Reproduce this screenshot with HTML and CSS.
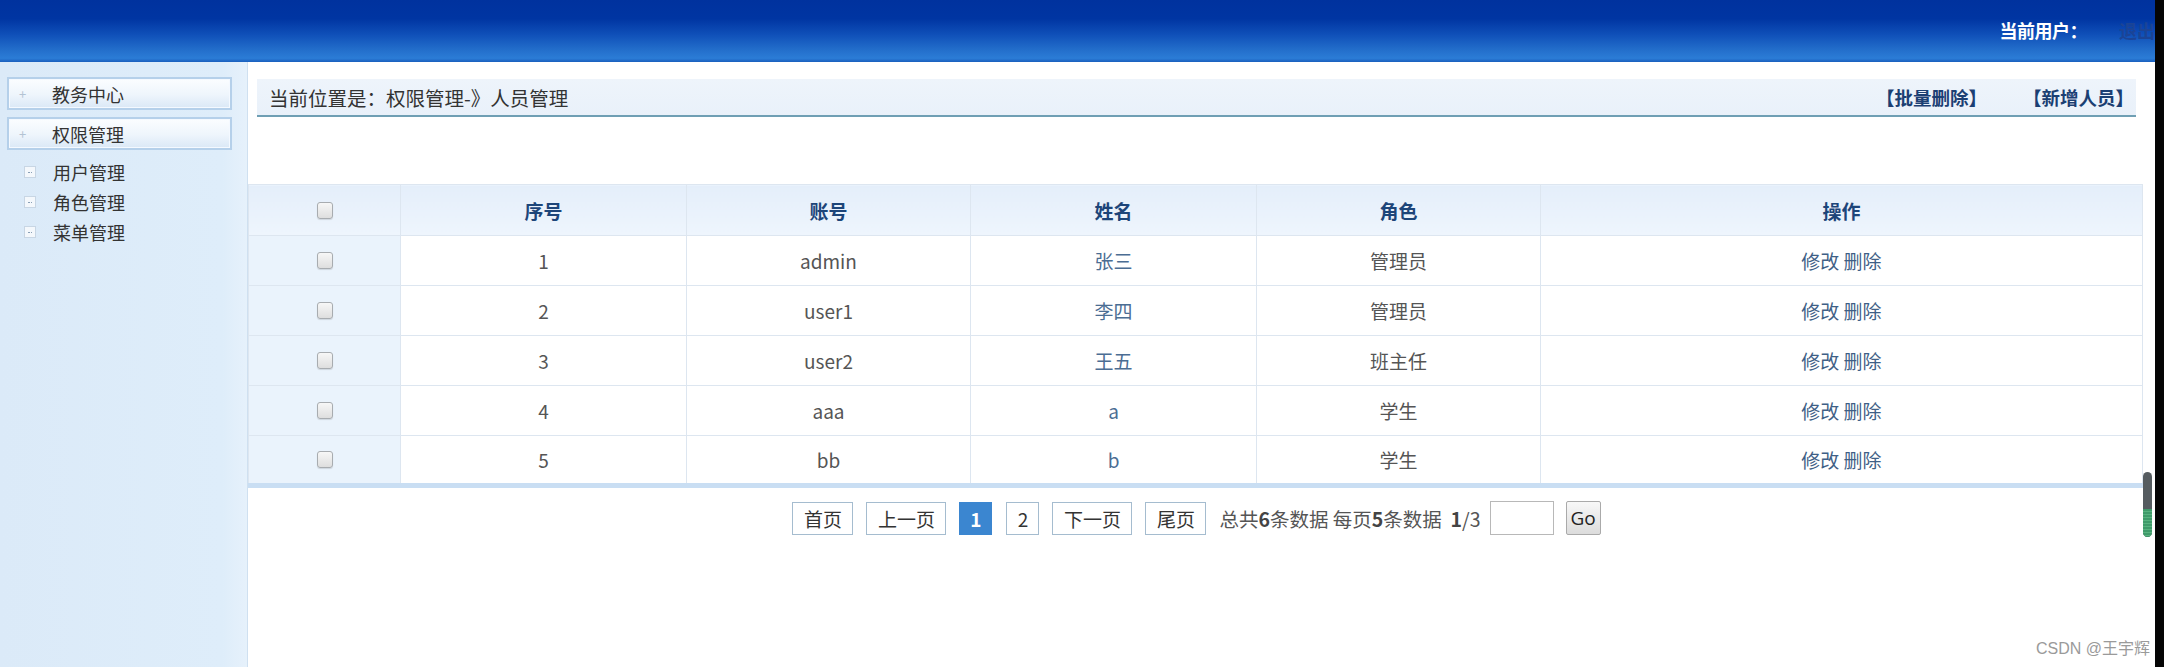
FILE: index.html
```html
<!DOCTYPE html>
<html lang="zh-CN">
<head>
<meta charset="utf-8">
<title>人员管理</title>
<link rel="stylesheet" href="styles.css">
</head>
<body>
<div class="screen">
  <div class="page">
    <header class="topbar">
      <span class="user-label">当前用户：</span>
      <span class="logout">退出</span>
    </header>
    <div class="body">
      <aside class="sidebar">
        <div class="menu-box"><span class="plus">+</span><span class="menu-text">教务中心</span></div>
        <div class="menu-box"><span class="plus">+</span><span class="menu-text">权限管理</span></div>
        <ul class="submenu">
          <li><span class="sub-icon"></span><span class="menu-text">用户管理</span></li>
          <li><span class="sub-icon"></span><span class="menu-text">角色管理</span></li>
          <li><span class="sub-icon"></span><span class="menu-text">菜单管理</span></li>
        </ul>
      </aside>
      <main class="main">
        <div class="crumb">
          <span class="crumb-text">当前位置是：权限管理-》人员管理</span>
          <div class="crumb-actions">
            <a class="act">【批量删除】</a>
            <a class="act">【新增人员】</a>
          </div>
        </div>
        <table class="grid">
          <colgroup>
            <col class="c-chk"><col class="c-mid"><col class="c-mid2"><col class="c-mid"><col class="c-mid2"><col>
          </colgroup>
          <thead>
            <tr><th class="chk"><input type="checkbox"></th><th>序号</th><th>账号</th><th>姓名</th><th>角色</th><th>操作</th></tr>
          </thead>
          <tbody>
            <tr><td class="chk"><input type="checkbox"></td><td>1</td><td>admin</td><td class="name">张三</td><td>管理员</td><td class="ops">修改 删除</td></tr>
            <tr><td class="chk"><input type="checkbox"></td><td>2</td><td>user1</td><td class="name">李四</td><td>管理员</td><td class="ops">修改 删除</td></tr>
            <tr><td class="chk"><input type="checkbox"></td><td>3</td><td>user2</td><td class="name">王五</td><td>班主任</td><td class="ops">修改 删除</td></tr>
            <tr><td class="chk"><input type="checkbox"></td><td>4</td><td>aaa</td><td class="name">a</td><td>学生</td><td class="ops">修改 删除</td></tr>
            <tr><td class="chk"><input type="checkbox"></td><td>5</td><td>bb</td><td class="name">b</td><td>学生</td><td class="ops">修改 删除</td></tr>
          </tbody>
        </table>
        <div class="pager">
          <a class="pbtn w-first">首页</a>
          <a class="pbtn w-prev">上一页</a>
          <a class="pbtn num active">1</a>
          <a class="pbtn num">2</a>
          <a class="pbtn w-prev">下一页</a>
          <a class="pbtn w-first">尾页</a>
          <span class="pinfo">总共<b>6</b>条数据 每页<b>5</b>条数据 &nbsp;<b>1</b>/3</span>
          <input class="pinput" type="text">
          <button class="go">Go</button>
        </div>
        <div class="scroll-thumb"><span class="thumb-green"></span></div>
        <div class="watermark">CSDN @王宇辉</div>
      </main>
    </div>
  </div>
  <div class="blackbar"></div>
</div>
</body>
</html>
```

FILE: styles.css
```css
* { box-sizing: border-box; }
html, body { margin: 0; padding: 0; }
body {
  width: 2164px;
  height: 667px;
  overflow: hidden;
  font-family: "Noto Sans CJK SC", "Noto Sans", sans-serif;
  font-size: 19px;
  color: #444;
  background: #fff;
}
.screen { display: flex; width: 2164px; height: 667px; }
.page { width: 2155px; height: 667px; display: flex; flex-direction: column; overflow: hidden; }
.blackbar { width: 9px; background: #050505; }

.topbar {
  height: 62px;
  flex: none;
  display: flex;
  align-items: center;
  justify-content: flex-end;
  background: linear-gradient(to bottom, #00329e 0%, #0035a2 30%, #0f4fb8 55%, #2470cc 82%, #2b7cd6 94%, #1a5fbe 100%);
}
.user-label { color: #fff; font-weight: bold; font-size: 18px; margin-top: -3px; letter-spacing: -0.5px; }
.logout { color: #1b4496; font-weight: bold; font-size: 18px; margin-left: 32px; margin-top: -3px; width: 36px; white-space: nowrap; overflow: hidden; }

.body { flex: 1; display: flex; min-height: 0; }

.sidebar {
  width: 248px;
  flex: none;
  background: linear-gradient(to right, #dbeaf8 0%, #deedfa 90%, #e6f1fb 100%);
  border-right: 1px solid #cfe0f0;
  padding: 15px 0 0 7px;
}
.menu-box {
  width: 225px;
  height: 33px;
  margin-bottom: 7px;
  display: flex;
  align-items: center;
  border: 2px solid #b5d0ea;
  background: linear-gradient(to bottom, #fbfdff 0%, #eef5fc 55%, #dae8f6 100%);
  box-shadow: inset 0 0 0 1px #f4f9ff;
}
.plus { width: 43px; padding-left: 10px; color: #b3c3d3; font-size: 13px; }
.menu-text { color: #333; font-size: 18px; }
.submenu { list-style: none; margin: 1px 0 0; padding: 0; }
.submenu li { height: 30px; display: flex; align-items: center; }
.sub-icon {
  width: 12px; height: 12px;
  margin: 0 17px 0 17px;
  border: 1px solid #c8d6e4;
  background: #f4f8fc;
  position: relative;
}
.sub-icon::after {
  content: "";
  position: absolute;
  left: 3px; top: 5px;
  width: 4px; height: 0;
  border-top: 1px dotted #8aa0b6;
}

.main { flex: 1; position: relative; padding-top: 17px; min-width: 0; }

.crumb {
  margin: 0 19px 0 9px;
  height: 38px;
  display: flex;
  align-items: center;
  justify-content: space-between;
  padding: 0 2px 0 12px;
  background: linear-gradient(to bottom, #eef4fb 0%, #e9f1fa 100%);
  border-bottom: 2px solid #6f9fb4;
}
.crumb-text { color: #333; font-size: 19.5px; }
.crumb-actions { display: flex; gap: 36px; }
.act { color: #1b3f73; font-weight: bold; font-size: 18.5px; cursor: pointer; }

.grid {
  margin-top: 67px;
  width: 1895px;
  border-collapse: collapse;
  table-layout: fixed;
  border-bottom: 5px solid #c9def3;
}
.c-chk { width: 152px; }
.c-mid { width: 286px; }
.c-mid2 { width: 284px; }
.grid th, .grid td {
  border: 1px solid #dde6f0;
  text-align: center;
  font-size: 19px;
  padding: 0;
}
.grid thead tr { height: 51px; }
.grid tbody tr { height: 50px; }
.grid th {
  color: #1d4579;
  font-weight: bold;
  background: linear-gradient(to bottom, #e4eefa 0%, #eef5fd 100%);
}
.grid td { color: #555; background: #fff; }
.grid td.chk { background: #eaf3fc; }
.grid td.name { color: #4b6d93; }
.grid td.ops { color: #3f5f86; }
.grid input[type="checkbox"] {
  appearance: none;
  -webkit-appearance: none;
  width: 16px; height: 17px;
  margin: 0;
  vertical-align: middle;
  border: 1px solid #a8acb0;
  border-radius: 3px;
  background: linear-gradient(to bottom, #f7f7f7 0%, #dedede 100%);
  box-shadow: 0 1px 1px rgba(0,0,0,0.12);
  position: relative;
  top: -3px;
}

.pager {
  margin-top: 13px;
  display: flex;
  align-items: center;
  justify-content: center;
  padding-right: 10px;
  gap: 13px;
}
.pbtn {
  height: 33px;
  display: flex;
  align-items: center;
  justify-content: center;
  border: 1px solid #a5bccf;
  background: #fff;
  color: #333;
  font-size: 19px;
}
.w-first { width: 61px; }
.w-prev { width: 80px; }
.num { width: 33px; }
.num.active { background: #3b86d0; border-color: #3b86d0; color: #fff; font-weight: bold; margin-right: 1px; }
.pinfo { color: #555; font-size: 19.5px; }
.pinfo b { color: #444; }
.pinput { width: 64px; height: 34px; border: 1px solid #b8b8b8; margin-left: -4px; }
.go {
  width: 35px; height: 34px;
  margin-left: -1px;
  border: 1px solid #aaa;
  border-radius: 2px;
  background: linear-gradient(to bottom, #f8f8f8, #dcdcdc);
  font-family: "Open Sans", sans-serif;
  font-size: 19px;
  color: #222;
  padding: 0;
}

.scroll-thumb {
  position: absolute;
  left: 1895px;
  top: 410px;
  width: 9px;
  height: 65px;
  border-radius: 5px;
  background: #555c60;
  overflow: hidden;
}
.thumb-green {
  position: absolute;
  left: 0; right: 0; bottom: 0;
  height: 28px;
  background: repeating-linear-gradient(to bottom, #3f9a6a 0, #3f9a6a 2px, #57b27e 2px, #57b27e 3px);
}
.watermark {
  position: absolute;
  right: 5px;
  bottom: 8px;
  font-family: "Liberation Sans", "Noto Sans CJK SC", sans-serif;
  font-size: 16px;
  color: #9a9a9a;
}
```
